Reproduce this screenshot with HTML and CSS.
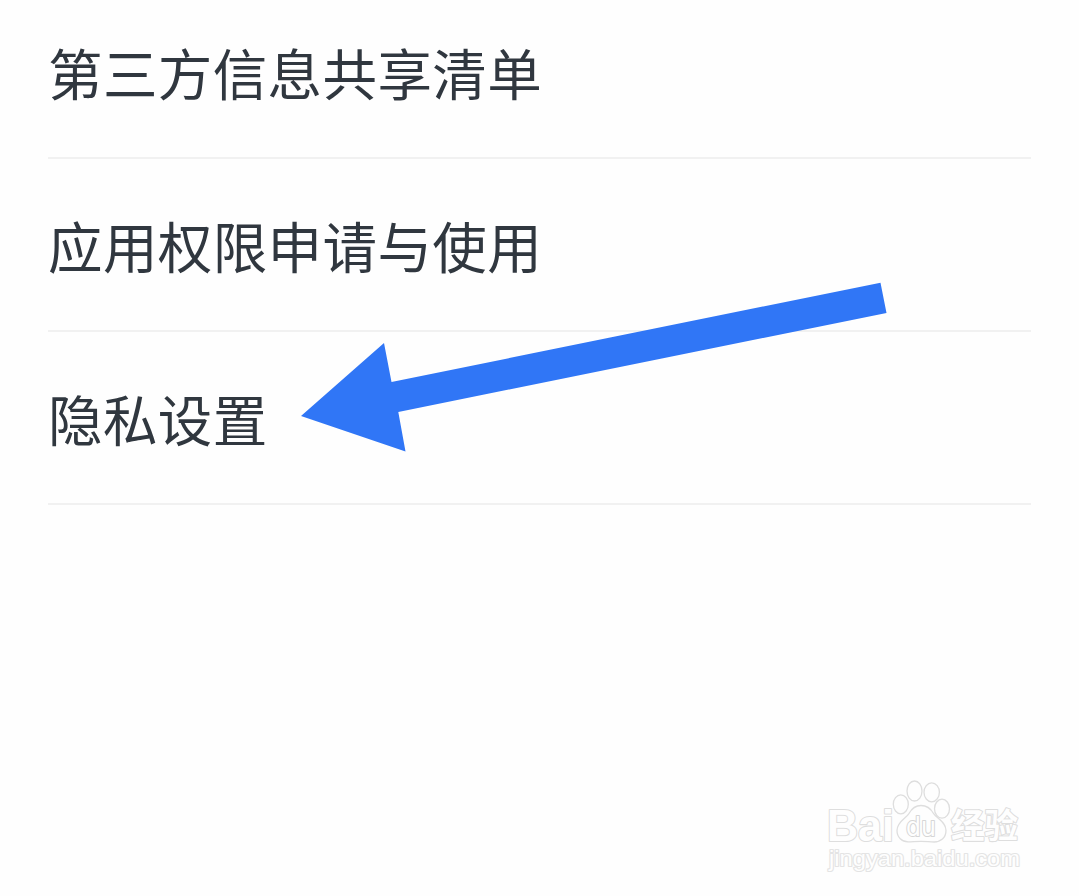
FILE: index.html
```html
<!DOCTYPE html>
<html lang="zh-CN">
<head>
  <meta charset="UTF-8" />
  <title>隐私设置</title>
  <meta name="viewport" content="width=device-width, initial-scale=1.0" />
  <link rel="stylesheet" href="styles.css">
</head>
<body>

  <ul class="menu">
    <li class="menu-item">第三方信息共享清单</li>
    <li class="menu-item">应用权限申请与使用</li>
    <li class="menu-item">隐私设置</li>
  </ul>

  <!-- Arrow pointing at the last item -->
  <svg class="arrow" width="586" height="170" viewBox="301 282 586 170">
    <polygon points="301,416 384,343 391.5,382 880.5,282.7 886.5,313 398.3,412 405.5,451.5" />
  </svg>

  <!-- Watermark -->
  <svg class="watermark" width="210" height="100" viewBox="820 776 210 100">
    <text class="wm-latin" x="827" y="840.5" textLength="67" lengthAdjust="spacingAndGlyphs">Bai</text>
    <ellipse cx="900.8" cy="804.3" rx="7.5" ry="9.5" />
    <ellipse cx="914.5" cy="791" rx="7.5" ry="10" />
    <ellipse cx="931.7" cy="792.3" rx="7.7" ry="9.5" />
    <ellipse cx="942" cy="808.7" rx="7.5" ry="9.5" />
    <path d="M921 805.5c-6 0-9.5 3.5-12 8-2.5 4.500-12 8-12 17 0 7 5 11.300 11 11.300 4 0 8-.5 13-.5s9 .7 13 .7c6.500 0 12-4 12-11.500 0-9-10-12.500-12.500-17-2.500-4.500-6.500-8-12.500-8z" />
    <text class="wm-du" x="906" y="836" textLength="30" lengthAdjust="spacingAndGlyphs">du</text>
    <text class="wm-cn" x="951" y="838" textLength="67" lengthAdjust="spacingAndGlyphs">经验</text>
    <text class="wm-url" x="829" y="866" textLength="191" lengthAdjust="spacingAndGlyphs">jingyan.baidu.com</text>
  </svg>

</body>
</html>
```
FILE: styles.css
```css
body {
  margin: 0;
  min-height: 896px;
  overflow: hidden;
  background: #fefefe;
  color: #30373f;
  font-family: "Noto Sans CJK SC", sans-serif;
}

.menu {
  list-style: none;
  margin: 0;
  padding: 0 48px;
}

.menu-item {
  box-sizing: border-box;
  height: 173px;
  border-bottom: 2px solid #f1f1f1;
  font-size: 54.5px;
  line-height: 172px;
  letter-spacing: 0.4px;
  white-space: nowrap;
}

/* list is scrolled a little */
.menu-item:first-child {
  margin-top: -14px;
}

.arrow {
  position: absolute;
  left: 301px;
  top: 282px;
  fill: #3076f6;
}

.watermark {
  position: absolute;
  left: 820px;
  top: 776px;
  fill: #fefefe;
  stroke: #dedede;
  stroke-width: 1.3;
}

.watermark text {
  paint-order: stroke;
  stroke-width: 2.2;
  stroke-linejoin: round;
}

.wm-latin {
  font: bold 44px "Liberation Sans", sans-serif;
}

.watermark .wm-du {
  font: 26px "DejaVu Sans", sans-serif;
  stroke: #d6d6d6;
}

.wm-cn {
  font: bold 34px "Noto Sans CJK SC", sans-serif;
}

.watermark .wm-url {
  font: 22px "Liberation Sans", sans-serif;
  stroke: #e4e4e4;
}
```
